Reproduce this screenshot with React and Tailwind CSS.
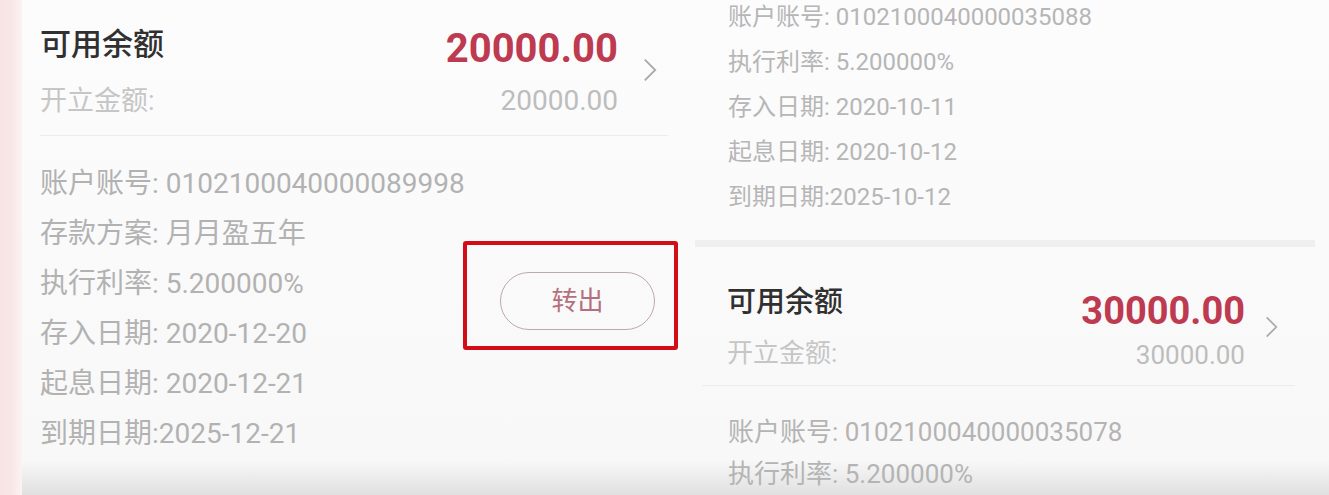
import React from "react";

const leftDetails = [
  "账户账号: 0102100040000089998",
  "存款方案: 月月盈五年",
  "执行利率: 5.200000%",
  "存入日期: 2020-12-20",
  "起息日期: 2020-12-21",
  "到期日期:2025-12-21",
];

const rightTopDetails = [
  "账户账号: 0102100040000035088",
  "执行利率: 5.200000%",
  "存入日期: 2020-10-11",
  "起息日期: 2020-10-12",
  "到期日期:2025-10-12",
];

const rightBottomDetails = ["账户账号: 0102100040000035078", "执行利率: 5.200000%"];

function Chevron({ className }) {
  return (
    <svg viewBox="0 0 12 20" className={className} fill="none">
      <polyline points="2,2 10,10 2,18" stroke="#a9a9a9" strokeWidth="1.4" />
    </svg>
  );
}

function App() {
  return (
    <div className="w-[1329px] h-[495px] overflow-hidden flex bg-linear-to-b from-[#fcfcfc] via-[#f8f8f8] via-93% to-[#e0e0e0] font-[family-name:Roboto,'Noto_Sans_CJK_SC',sans-serif]">
      {/* pink edge of the page behind */}
      <div className="w-[22px] shrink-0 bg-linear-to-r from-[#f9e3e5] via-[#f9e6e7] to-[#fbf3f3]" />

      {/* left card */}
      <div className="w-[668px] shrink-0 pl-[18px] pr-[22px]">
        <div className="flex items-center pt-[27px] pb-[19px] border-b border-[#ececec]">
          <div className="flex flex-col">
            <span className="text-[31px] leading-[36px] font-medium text-[#303030]">可用余额</span>
            <span className="mt-[23px] text-[27px] leading-[30px] text-[#c6c6c6]">开立金额:</span>
          </div>
          <div className="ml-auto flex flex-col items-end">
            <span className="text-[40px] leading-[44px] font-bold text-[#bd3a50]">20000.00</span>
            <span className="mt-[15px] text-[28px] leading-[30px] text-[#bdbdbd]">20000.00</span>
          </div>
          <Chevron className="ml-[22px] mr-[8px] -mt-[4px] w-[20px] h-[26px]" />
        </div>

        <div className="flex items-start pt-[23px]">
          <div className="w-[420px] shrink-0 whitespace-nowrap flex flex-col text-[28px] leading-[50px] text-[#b2b2b2]">
            {leftDetails.map((line) => (
              <span key={line}>{line}</span>
            ))}
          </div>
          <div className="ml-auto -mr-[10px] mt-[82px] border-4 border-[#d20d18] rounded-[3px] pl-[33px] pr-[19px] pt-[27px] pb-[16px]">
            <button className="w-[155px] h-[58px] rounded-full border-[1.5px] border-[#bfa7ab] text-[26px] text-[#b5707e] flex items-center justify-center">
              转出
            </button>
          </div>
        </div>
      </div>

      {/* right card */}
      <div className="flex-1 flex flex-col">
        <div className="pl-[38px] -mt-[5px] whitespace-nowrap flex flex-col text-[24px] leading-[45px] text-[#b6b6b6]">
          {rightTopDetails.map((line) => (
            <span key={line}>{line}</span>
          ))}
        </div>
        <div className="mt-[20px] ml-[5px] mr-[14px] h-[12px] bg-[#efefef]" />

        <div className="ml-[12px] mr-[34px]">
          <div className="flex items-center pl-[25px] pr-[15px] pt-[36px] pb-[15px] border-b border-[#ececec]">
            <div className="flex flex-col">
              <span className="text-[29px] leading-[34px] font-medium text-[#303030]">可用余额</span>
              <span className="mt-[19px] text-[26px] leading-[30px] text-[#c6c6c6]">开立金额:</span>
            </div>
            <div className="ml-auto mt-[8px] flex flex-col items-end">
              <span className="text-[38px] leading-[40px] font-bold text-[#bd3a50]">30000.00</span>
              <span className="mt-[9px] text-[26px] leading-[30px] text-[#bdbdbd]">30000.00</span>
            </div>
            <Chevron className="ml-[18px] w-[17px] h-[24px]" />
          </div>
          <div className="pl-[26px] pt-[25px] whitespace-nowrap flex flex-col text-[26px] leading-[42px] text-[#b4b4b4]">
            {rightBottomDetails.map((line) => (
              <span key={line}>{line}</span>
            ))}
          </div>
        </div>
      </div>
    </div>
  );
}

export default App;
